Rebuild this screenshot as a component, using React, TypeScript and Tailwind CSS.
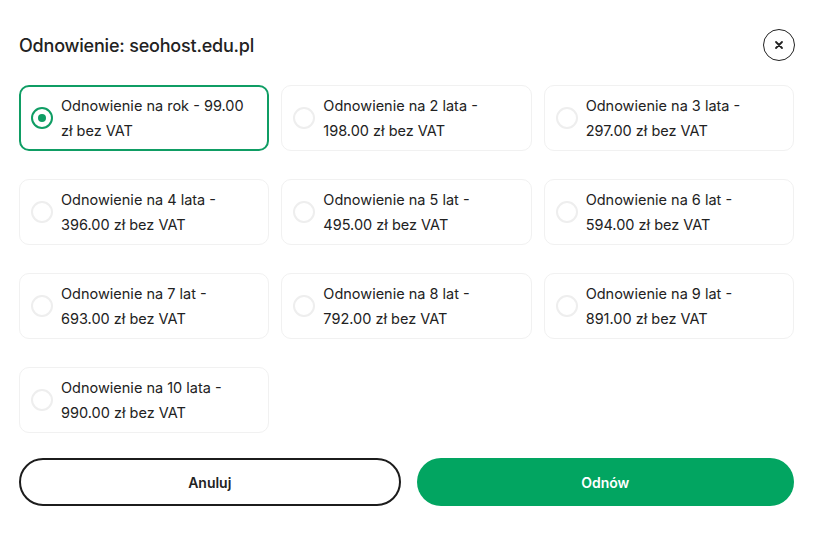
import { useState } from "react";

const options = [
  { label: "Odnowienie na rok", price: "99.00" },
  { label: "Odnowienie na 2 lata", price: "198.00" },
  { label: "Odnowienie na 3 lata", price: "297.00" },
  { label: "Odnowienie na 4 lata", price: "396.00" },
  { label: "Odnowienie na 5 lat", price: "495.00" },
  { label: "Odnowienie na 6 lat", price: "594.00" },
  { label: "Odnowienie na 7 lat", price: "693.00" },
  { label: "Odnowienie na 8 lat", price: "792.00" },
  { label: "Odnowienie na 9 lat", price: "891.00" },
  { label: "Odnowienie na 10 lata", price: "990.00" },
];

export default function App() {
  const [selected, setSelected] = useState(0);

  return (
    <div
      className="w-[825px] h-[539px] bg-white text-[#222] pl-[19px] pr-[31px] pt-[30px]"
      style={{ fontFamily: "Inter, 'Noto Sans', sans-serif" }}
    >
      {/* Header */}
      <div className="flex items-center justify-between h-[30px]">
        <h2 className="text-[18px] font-medium tracking-[-0.2px]">Odnowienie: seohost.edu.pl</h2>
        <button className="w-[32px] h-[32px] rounded-full border border-[#222] flex items-center justify-center mr-[-1px]">
          <svg width="10" height="10" viewBox="0 0 10 10">
            <path d="M2 2 L8 8 M8 2 L2 8" stroke="#222" strokeWidth="1.8" strokeLinecap="round" />
          </svg>
        </button>
      </div>

      {/* Options */}
      <div className="grid grid-cols-3 gap-x-[12px] gap-y-[28px] mt-[25px]">
        {options.map((o, i) => {
          const active = i === selected;
          return (
            <button
              key={o.label}
              onClick={() => setSelected(i)}
              className={`h-[66px] rounded-[10px] flex items-center text-left pr-[12px] ${
                active ? "border-2 border-[#0f9d64] pl-[10px]" : "border border-[#f1f1f1] pl-[11px]"
              }`}
            >
              <span
                className={`shrink-0 w-[22px] h-[22px] rounded-full flex items-center justify-center ${
                  active ? "border-2 border-[#0f9d64]" : "border-2 border-[#eeeeee]"
                }`}
              >
                {active && <span className="w-[8px] h-[8px] rounded-full bg-[#0f9d64]" />}
              </span>
              <span className="ml-[8px] text-[14.5px] leading-[25px] text-[#222]">
                {o.label} - {o.price} zł bez VAT
              </span>
            </button>
          );
        })}
      </div>

      {/* Actions */}
      <div className="flex gap-[16px] mt-[25px]">
        <button className="flex-1 h-[48px] rounded-full border-2 border-[#1c1c1c] text-[14px] font-semibold">
          Anuluj
        </button>
        <button className="flex-1 h-[48px] rounded-full bg-[#02a561] text-white text-[14px] font-semibold">
          Odnów
        </button>
      </div>
    </div>
  );
}
